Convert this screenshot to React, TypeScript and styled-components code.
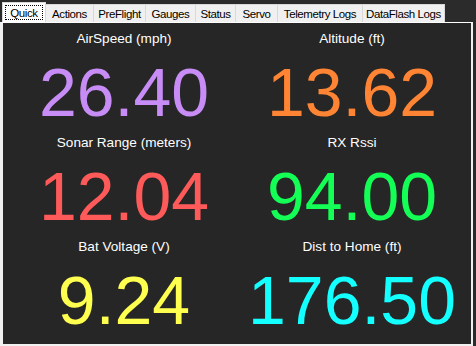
import React from "react";
import styled, { createGlobalStyle } from "styled-components";

const Global = createGlobalStyle`
  html, body { margin: 0; padding: 0; background: #2b2b2b; }
  body { width: 476px; height: 346px; overflow: hidden; }
`;

const Window = styled.div`
  width: 476px;
  height: 346px;
  background: #2b2b2b;
  display: flex;
  flex-direction: column;
  font-family: "Liberation Sans", Arial, sans-serif;
`;

const TabStrip = styled.div`
  height: 22px;
  display: flex;
  align-items: flex-end;
  padding-left: 2px;
  box-sizing: border-box;
`;

const Tab = styled.div<{ $w: number; $active?: boolean }>`
  width: ${(p) => p.$w}px;
  height: ${(p) => (p.$active ? 20 : 18)}px;
  box-sizing: border-box;
  background: ${(p) => (p.$active ? "#ffffff" : "#f0f0f0")};
  border: 1px solid #d9d9d9;
  border-bottom: none;
  border-left: ${(p) => (p.$active ? "1px solid #d9d9d9" : "none")};
  display: flex;
  align-items: center;
  justify-content: center;
  font-size: 11.5px;
  letter-spacing: -0.4px;
  color: #000;
  padding: ${(p) => (p.$active ? "2px" : "0")};
`;

const Focus = styled.span`
  flex: 1;
  align-self: stretch;
  display: flex;
  align-items: center;
  justify-content: center;
  border: 1px dotted #000;
`;

const Panel = styled.div`
  width: 473px;
  height: 324px;
  box-sizing: border-box;
  background: #262626;
  border-top: 1px solid #ffffff;
  border-left: 3px solid #f0f0f0;
  border-right: 2px solid #f0f0f0;
  border-bottom: 2px solid #f0f0f0;
  padding: 8px 5px 0 7px;
  display: grid;
  grid-template-columns: 1fr 1fr;
  grid-auto-rows: 95px;
  row-gap: 9px;
`;

const Cell = styled.div`
  display: flex;
  flex-direction: column;
  align-items: center;
`;

const Title = styled.div`
  font-size: 13.6px;
  line-height: 15px;
  color: #ffffff;
  margin-bottom: 12px;
  white-space: nowrap;
`;

const Value = styled.div<{ $c: string }>`
  font-size: 68px;
  line-height: 68px;
  color: ${(p) => p.$c};
  white-space: nowrap;
`;

const tabs: [string, number][] = [
  ["Quick", 44],
  ["Actions", 48],
  ["PreFlight", 52],
  ["Gauges", 50],
  ["Status", 40],
  ["Servo", 42],
  ["Telemetry Logs", 85],
  ["DataFlash Logs", 82],
];

const items: [string, string, string][] = [
  ["AirSpeed (mph)", "26.40", "#c88cf6"],
  ["Altitude (ft)", "13.62", "#ff8433"],
  ["Sonar Range (meters)", "12.04", "#ff5a5a"],
  ["RX Rssi", "94.00", "#14ff55"],
  ["Bat Voltage (V)", "9.24", "#ffff50"],
  ["Dist to Home (ft)", "176.50", "#14ffff"],
];

export default function App() {
  return (
    <Window>
      <Global />
      <TabStrip>
        {tabs.map(([t, w], i) => (
          <Tab key={t} $w={w} $active={i === 0}>
            {i === 0 ? <Focus>{t}</Focus> : t}
          </Tab>
        ))}
      </TabStrip>
      <Panel>
        {items.map(([t, v, c]) => (
          <Cell key={t}>
            <Title>{t}</Title>
            <Value $c={c}>{v}</Value>
          </Cell>
        ))}
      </Panel>
    </Window>
  );
}
